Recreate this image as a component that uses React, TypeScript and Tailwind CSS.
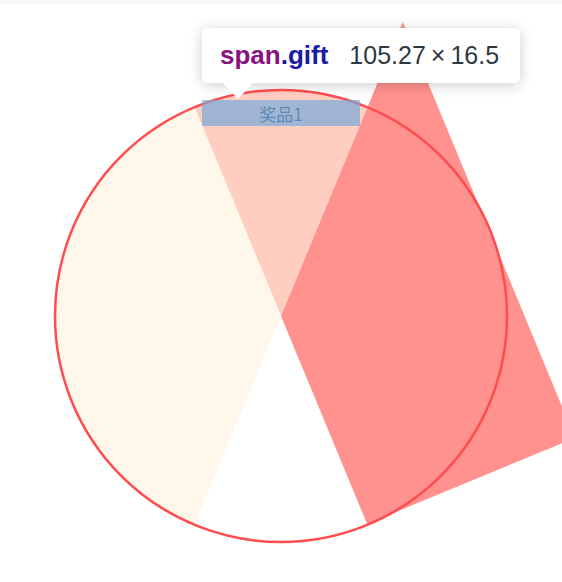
// Prize wheel with a devtools element highlight over the first gift
const C = { x: 281, y: 316 };

function pt(p: [number, number]) {
  return `${p[0].toFixed(1)},${p[1].toFixed(1)}`;
}

function Wheel() {
  const s = 0.3827;
  const c = 0.9239;
  const far = 700;
  const upLeft: [number, number] = [C.x - far * s, C.y - far * c];
  const upRight: [number, number] = [C.x + far * s, C.y - far * c];
  const downLeft: [number, number] = [C.x - far * s, C.y + far * c];

  // red half-square, 225 wide, tilted 22.5deg, not clipped by the disc
  const half = 225;
  const t: [number, number] = [C.x - half * s + half * c, C.y - half * c - half * s];
  const d: [number, number] = [C.x + half * s + half * c, C.y + half * c - half * s];
  const b: [number, number] = [C.x + half * s, C.y + half * c];

  return (
    <svg className="absolute left-0 top-0" width="562" height="582" viewBox="0 0 562 582">
      <defs>
        <clipPath id="disc">
          <circle cx={C.x} cy={C.y} r="226" />
        </clipPath>
      </defs>
      <g clipPath="url(#disc)">
        <polygon fill="#ffcec0" points={`${C.x},${C.y} ${pt(upLeft)} ${pt(upRight)}`} />
        <polygon
          fill="#fff7ea"
          points={`${C.x},${C.y} ${pt(upLeft)} -500,-400 -500,900 ${pt(downLeft)}`}
        />
      </g>
      <polygon fill="#ff918e" points={`${C.x},${C.y} ${pt(t)} ${pt(d)} ${pt(b)}`} />
      <circle cx={C.x} cy={C.y} r="226" fill="none" stroke="#ff4c4f" strokeWidth="2.5" />
    </svg>
  );
}

export default function App() {
  return (
    <div className="relative h-[582px] w-[562px] overflow-hidden bg-white font-['Liberation_Sans',Arial,sans-serif]">
      <div className="h-[4px] bg-[#f6f6f6]" />
      <Wheel />

      <span className="gift absolute left-[202px] top-[100px] flex h-[26px] w-[158px] items-center justify-center font-['Noto_Sans_CJK_SC',sans-serif] text-[17px] leading-none text-[#45506a]">
        奖品1
        <span className="absolute inset-0 bg-[rgba(111,168,220,0.66)]" />
      </span>

      <div className="absolute left-[202px] top-[28px] flex h-[55px] w-[318px] items-center gap-[21px] rounded-[5px] bg-white pl-[18px] shadow-[0_2px_14px_rgba(0,0,0,0.2)]">
        <span className="text-[26px] font-bold">
          <span className="text-[#881280]">span</span>
          <span className="text-[#1a1aa6]">.gift</span>
        </span>
        <span className="text-[25px] text-[#303942]">105.27{"\u2009×\u2009"}16.5</span>
      </div>
      <div className="absolute left-[222px] top-[82px] h-0 w-0 border-x-[16px] border-t-[17px] border-x-transparent border-t-white" />
    </div>
  );
}
